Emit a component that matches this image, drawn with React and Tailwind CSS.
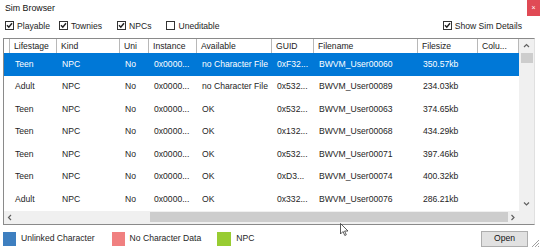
import React from "react";

const cols = [
  { w: 6, label: "" },
  { w: 47, label: "Lifestage" },
  { w: 63, label: "Kind" },
  { w: 29, label: "Uni" },
  { w: 48, label: "Instance" },
  { w: 75, label: "Available" },
  { w: 42, label: "GUID" },
  { w: 104, label: "Filename" },
  { w: 60, label: "Filesize" },
  { w: 41, label: "Colu..." },
];

const rows = [
  ["Teen", "NPC", "No", "0x0000...", "no Character File", "0xF32...", "BWVM_User00060", "350.57kb"],
  ["Adult", "NPC", "No", "0x0000...", "no Character File", "0x532...", "BWVM_User00089", "234.03kb"],
  ["Teen", "NPC", "No", "0x0000...", "OK", "0x532...", "BWVM_User00063", "374.65kb"],
  ["Teen", "NPC", "No", "0x0000...", "OK", "0x132...", "BWVM_User00068", "434.29kb"],
  ["Teen", "NPC", "No", "0x0000...", "OK", "0x532...", "BWVM_User00071", "397.46kb"],
  ["Teen", "NPC", "No", "0x0000...", "OK", "0xD3...", "BWVM_User00074", "400.32kb"],
  ["Adult", "NPC", "No", "0x0000...", "OK", "0x332...", "BWVM_User00076", "286.21kb"],
];

function Check({ checked }) {
  return (
    <span className="w-[9px] h-[9px] border border-[#333] bg-white flex items-center justify-center shrink-0">
      {checked && (
        <svg width="7" height="7" viewBox="0 0 7 7">
          <path d="M1 3.2 L2.8 5.2 L6 1.2" stroke="#222" strokeWidth="1.5" fill="none" />
        </svg>
      )}
    </span>
  );
}

function CB({ checked, label, className }) {
  return (
    <div className={"flex items-center gap-[3px] " + (className || "")}>
      <Check checked={checked} />
      <span>{label}</span>
    </div>
  );
}

function Chevron({ dir }) {
  const d = {
    up: "M1 4 L3.5 1.5 L6 4",
    down: "M1 1.5 L3.5 4 L6 1.5",
    left: "M4 1 L1.5 3.5 L4 6",
    right: "M1.5 1 L4 3.5 L1.5 6",
  }[dir];
  const vertical = dir === "up" || dir === "down";
  return (
    <svg width={vertical ? 7 : 6} height={vertical ? 6 : 7} viewBox={vertical ? "0 0 7 6" : "0 0 6 7"}>
      <path d={d} stroke="#606060" strokeWidth="1.2" fill="none" />
    </svg>
  );
}

export default function App() {
  return (
    <div
      className="relative w-[540px] h-[248px] bg-white overflow-hidden text-[8.6px] text-[#1e1e1e]"
      style={{ fontFamily: '"Liberation Sans", Arial, sans-serif' }}
    >
      {/* title bar */}
      <div className="flex justify-between h-[16px]">
        <div className="pl-[5px] pt-[2px] text-[8.8px] text-[#111]">Sim Browser</div>
        <div className="w-[13px] h-[16px] bg-[#e04a55] flex items-center justify-center text-white text-[7px]">
          ×
        </div>
      </div>

      {/* checkbox row */}
      <div className="flex items-center h-[20px] mt-[0px]">
        <CB checked label="Playable" className="ml-[5px]" />
        <CB checked label="Townies" className="ml-[9px]" />
        <CB checked label="NPCs" className="ml-[15px]" />
        <CB checked={false} label="Uneditable" className="ml-[15px]" />
        <CB checked label="Show Sim Details" className="ml-auto mr-[18px]" />
      </div>

      {/* table */}
      <div className="ml-[3px] mt-[2px] w-[532px] border border-[#8a8a8a] border-r-[#e0e0e0] flex flex-col">
        <div className="flex">
          <div className="w-[515px] flex flex-col">
            {/* header */}
            <div className="flex h-[14px] bg-white">
              {cols.map((c, i) => (
                <div
                  key={i}
                  className="border-r border-[#b8b8b8] pl-[4px] flex items-center overflow-hidden whitespace-nowrap text-[#222]"
                  style={{ width: c.w }}
                >
                  {c.label}
                </div>
              ))}
            </div>
            {/* rows */}
            {rows.map((r, ri) => {
              const sel = ri === 0;
              return (
                <div
                  key={ri}
                  className={"flex h-[22.5px] items-center " + (sel ? "bg-[#0078d7] text-white" : "bg-white text-[#1e1e1e]")}
                >
                  {cols.map((c, ci) => (
                    <div
                      key={ci}
                      className="pl-[5px] overflow-hidden whitespace-nowrap"
                      style={{ width: c.w }}
                    >
                      {ci === 0 ? "" : r[ci - 1] || ""}
                    </div>
                  ))}
                </div>
              );
            })}
          </div>
          {/* vertical scrollbar */}
          <div className="w-[15px] bg-[#f0f0f0] flex flex-col items-center">
            <div className="h-[14px] flex items-center justify-center">
              <Chevron dir="up" />
            </div>
            <div className="w-[12px] h-[10px] bg-[#cdcdcd]" />
            <div className="flex-1" />
            <div className="h-[14px] flex items-center justify-center">
              <Chevron dir="down" />
            </div>
          </div>
        </div>
        {/* horizontal scrollbar */}
        <div className="flex h-[13px] bg-[#f0f0f0]">
          <div className="w-[515px] flex items-center">
            <div className="w-[12px] flex items-center justify-center">
              <Chevron dir="left" />
            </div>
            <div className="flex-1 h-full flex items-center">
              <div className="ml-[134px] w-[358px] h-[10px] bg-[#cdcdcd]" />
            </div>
            <div className="w-[12px] flex items-center justify-center">
              <Chevron dir="right" />
            </div>
          </div>
          <div className="w-[15px] bg-[#f0f0f0]" />
        </div>
      </div>

      {/* legend / footer */}
      <div className="flex items-center mt-[6px] h-[16px]">
        <div className="ml-[3px] w-[13px] h-[14px] bg-[#3e7fc0]" />
        <span className="ml-[5px]">Unlinked Character</span>
        <div className="ml-[17px] w-[13px] h-[14px] bg-[#f08080]" />
        <span className="ml-[5px]">No Character Data</span>
        <div className="ml-[16px] w-[14px] h-[14px] bg-[#98cc32]" />
        <span className="ml-[5px]">NPC</span>
        <div className="ml-auto mr-[12px] w-[47px] h-[16px] bg-[#e1e1e1] border border-[#adadad] flex items-center justify-center text-[#111]">
          Open
        </div>
      </div>

      {/* resize grip */}
      <svg className="absolute right-0 bottom-0" width="10" height="10" viewBox="0 0 10 10">
        <path d="M9 2 L2 9 M9 5 L5 9 M9 8 L8 9" stroke="#a0a0a0" strokeWidth="1" />
      </svg>

      {/* mouse cursor */}
      <svg className="absolute left-[340px] top-[223px]" width="9" height="14" viewBox="0 0 9 14">
        <path d="M0.5 0.5 L0.5 11 L3 8.5 L4.8 12.5 L6.3 11.8 L4.6 8 L8 8 Z" fill="white" stroke="#333" strokeWidth="0.8" />
      </svg>
    </div>
  );
}
